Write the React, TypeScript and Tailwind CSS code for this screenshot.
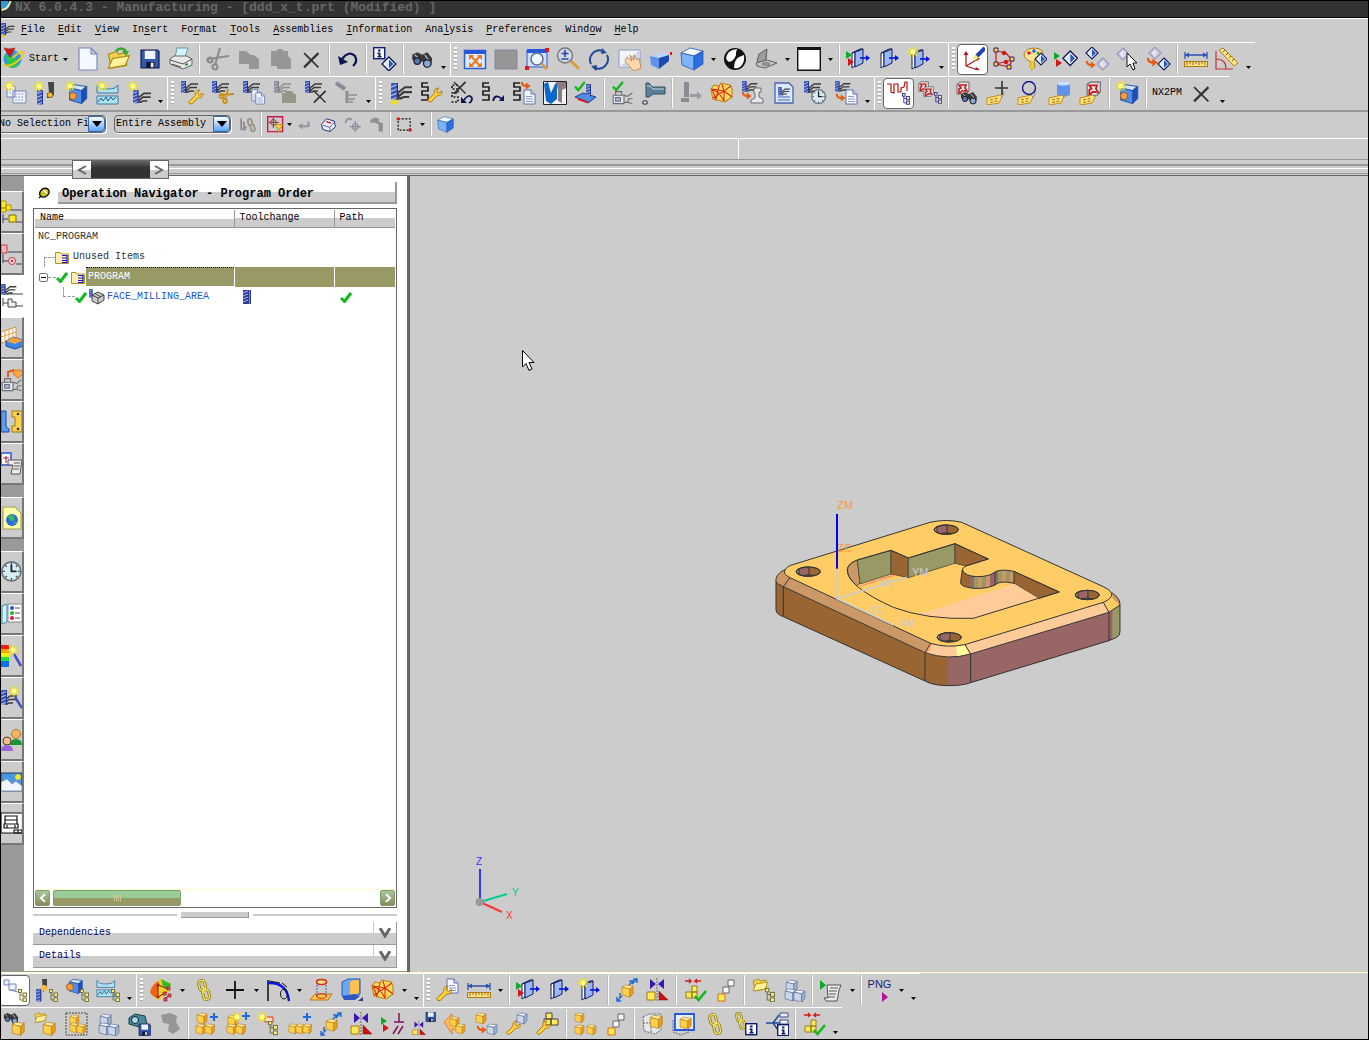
import type { ReactNode } from 'react';
import { clsx } from 'clsx';

type Pos = { x?: number; y?: number; s?: number };

const at = ({ x = 0, y = 0, s = 1 }: Pos) => `translate(${x} ${y}) scale(${s})`;

/* ---------- small drawings that the toolbar icons are built from ---------- */

function Cube({ top = '#fff0a0', left = '#ffd04c', right = '#e8a022', line = '#b87a1c', ...p }: Pos & { top?: string; left?: string; right?: string; line?: string }) {
  return (
    <g transform={at(p)} stroke={line} strokeWidth=".6" strokeLinejoin="round">
      <path d="M1 3 4 1 11 2 8 4.5z" fill={top} />
      <path d="M1 3 8 4.5V12L1 10z" fill={left} />
      <path d="M8 4.5 11 2V9L8 12z" fill={right} />
    </g>
  );
}

const BlueCube = (p: Pos) => <Cube {...p} top="#cfe4ff" left="#4d8ef0" right="#1c4fb8" line="#2a55a8" />;
const GhostCube = (p: Pos) => <Cube {...p} top="#eef4f8" left="#c9d8e4" right="#9fb4cc" line="#5a6aa0" />;

function Star(p: Pos) {
  return (
    <g transform={at(p)}>
      <path d="M5-.5v11M-.5 5h11M1 1l8 8M9 1l-8 8" stroke="#f2e21a" strokeWidth="1.3" />
      <circle cx="5" cy="5" r="2.5" fill="#ffff8a" />
    </g>
  );
}

function Drill({ gray, ...p }: Pos & { gray?: boolean }) {
  return (
    <g transform={at(p)}>
      <rect width="5" height="12" rx="1" fill={gray ? '#8c8c9c' : '#3a55b8'} />
      <path d="M0 3l5-2M0 6l5-2M0 9l5-2M0 12l5-2" stroke={gray ? '#b4b4bc' : '#a8b8f0'} strokeWidth=".9" />
      <path d="M4.500 0v12" stroke={gray ? '#777' : '#1c2a78'} strokeWidth=".8" />
    </g>
  );
}

const Flutes = ({ gray, ...p }: Pos & { gray?: boolean }) => (
  <path transform={at(p)} d="M0 9V7L5 3h7M0 10 4 6.500h7M0 11h2l2-1h4" fill="none" stroke={gray ? '#8c8c8c' : '#3c3c3c'} strokeWidth="1.500" />
);

const Mill = ({ gray, ...p }: Pos & { gray?: boolean }) => (
  <g transform={at(p)}>
    <Flutes x={5} gray={gray} />
    <Drill gray={gray} />
  </g>
);

const Wrench = (p: Pos) => (
  <path transform={at(p)} d="M1 12 7 6C6 3 8 1 11 1L9 4l2 2 3-2c1 3-2 5-4 4L4 14c-2 1-4-1-3-2z" fill="#ffd23c" stroke="#a8700c" strokeWidth=".9" />
);

const Scissors = ({ c = '#8c8c8c', ...p }: Pos & { c?: string }) => (
  <g transform={at(p)} fill="none" stroke={c} strokeWidth="1.800">
    <path d="M9 0 6 10M1 6l14-1" />
    <circle cx="2.500" cy="7" r="2" />
    <circle cx="6" cy="12" r="2" />
  </g>
);

const Cross = (p: Pos) => (
  <g transform={at(p)} fill="none" stroke="#333">
    <path d="M1 1 14 14" strokeWidth="1.500" />
    <path d="M14 1 1 14" strokeWidth="2" />
  </g>
);

const Check = (p: Pos) => <path transform={at(p)} d="M0 5 3.500 9 11 0" fill="none" stroke="#12b81c" strokeWidth="2.600" />;

const Page = (p: Pos) => (
  <g transform={at(p)} stroke="#5064a8" strokeWidth=".9">
    <path d="M1 1H8L12 5V15H1z" fill="#f4f7ff" />
    <path d="M8 1v4h4" fill="#ccd8f0" />
    <path d="M3 7.500h6M3 10h7M3 12.500h7" stroke="#8090b8" />
  </g>
);

const Turn = (p: Pos) => (
  <g transform={at(p)}>
    <path d="M1 0Q1 5 7 5" fill="none" stroke="#e85a10" strokeWidth="2.600" />
    <path d="M6 .5 12 5 6 9.500z" fill="#e85a10" />
  </g>
);

const Binoculars = (p: Pos) => (
  <g transform={at(p)}>
    <path d="M1 3 5 1 9 3 13 1 17 6 16 12 11 13 9 8 6 10 1 7z" fill="#38383c" />
    <path d="M3 3l3 3M11 3l3 4" stroke="#b8bcc4" />
    <circle cx="5" cy="8" r="2.600" fill="#5878b8" stroke="#222" />
    <circle cx="13" cy="10" r="3" fill="#88a8e0" stroke="#222" />
  </g>
);

const Tree = ({ c = '#2828a8', ...p }: Pos & { c?: string }) => (
  <g transform={at(p)} fill="#ffef80" stroke={c} strokeWidth=".9">
    <path d="M2 3v8h4M2 6h4" fill="none" />
    <rect x=".5" y=".5" width="3" height="3" />
    <rect x="5" y="4" width="3.500" height="3.500" />
    <rect x="5" y="9" width="3.500" height="3.500" />
  </g>
);

const Tag = (p: Pos) => (
  <g transform={at(p)}>
    <path d="M1 5 14 2 16 4 13 10 1 12z" fill="#ffe27a" stroke="#b8860c" strokeWidth=".9" />
    <path d="M4 7l3-.7M8.500 6l3-.7M4 9.500l3-.7M8.500 8.500l3-.7" stroke="#a07010" />
    <path d="M15 4Q20 2 17-2" fill="none" stroke="#888" strokeWidth=".8" />
  </g>
);

const Diamond = ({ pale, ...p }: Pos & { pale?: boolean }) => (
  <g transform={at(p)}>
    <path d="M6 0 12 6 6 12 0 6z" fill={pale ? '#c8c8dc' : '#fff'} stroke={pale ? '#9898c0' : '#101c60'} strokeWidth="1.200" />
    <path d="M6 2v8l4-4z" fill={pale ? '#d8d8e8' : '#2c58b8'} />
    <path d="M6 2v8L2.500 6z" fill={pale ? '#e8e8f0' : '#d8e8ff'} />
  </g>
);

const Plus = (p: Pos) => <path transform={at(p)} d="M4 0v8M0 4h8" stroke="#1c6ce0" strokeWidth="2" />;

const Chain = ({ gray, ...p }: Pos & { gray?: boolean }) => (
  <g transform={at(p)} fill="none" stroke={gray ? '#8c8c78' : '#8c7c10'} strokeWidth="3">
    <rect x="2" y="1.500" width="6" height="10" rx="3" transform="rotate(-12 5 6)" />
    <rect x="6" y="10.500" width="6" height="10" rx="3" transform="rotate(-12 9 15)" />
    <g stroke={gray ? '#aaa898' : '#f4e468'} strokeWidth="1.300">
      <rect x="2" y="1.500" width="6" height="10" rx="3" transform="rotate(-12 5 6)" />
      <rect x="6" y="10.500" width="6" height="10" rx="3" transform="rotate(-12 9 15)" />
      <path d="M7 8v6" />
    </g>
  </g>
);

const Floppy = (p: Pos) => (
  <g transform={at(p)}>
    <path d="M0 0H11L12 1V12H0z" fill="#3458ac" stroke="#101c50" strokeWidth=".8" />
    <rect x="2.500" y=".5" width="7" height="5.500" fill="#eef2fa" />
    <rect x="3.500" y="8" width="5.500" height="4" fill="#101830" />
    <rect x="6.500" y="8.500" width="1.800" height="3" fill="#eee" />
  </g>
);

const Folder = (p: Pos) => (
  <g transform={at(p)} stroke="#a8860c" strokeWidth=".8">
    <path d="M1 3 7 1 8 3 14 2V11L3 13z" fill="#f0d050" />
    <path d="M1 13 4 6 16 4 13 11z" fill="#fff29a" />
  </g>
);

const Flags = (p: Pos) => (
  <g transform={at(p)}>
    <path d="M0 0 6 4 0 8z" fill="#10a828" />
    <path d="M2 7 8 11 2 15z" fill="#d01818" />
  </g>
);

const Door = (p: Pos) => (
  <g transform={at(p)} stroke="#101c60" strokeWidth="1">
    <path d="M1 5 4 4V18L1 20z" fill="#fff" />
    <path d="M4 4 12 1V15L4 19z" fill="#9cb8f4" />
    <path d="M1 5 9 1H12L4 4z" fill="#dbe6ff" />
    <path d="M9 10h7" stroke="#0010e8" strokeWidth="1.600" />
    <path d="M15 7 19 10 15 13z" fill="#0010e8" stroke="none" />
  </g>
);

const Snake = ({ dotted, ...p }: Pos & { dotted?: boolean }) => (
  <path transform={at(p)} d="M8 1H2V5H8V9H2V13H8V18H1" fill="none" stroke="#222" strokeWidth="1.700" strokeDasharray={dotted ? '2 1.500' : undefined} />
);

const Clock = (p: Pos) => (
  <g transform={at(p)}>
    <circle cx="8" cy="8" r="7.300" fill="#d8ecf4" stroke="#6c747c" strokeWidth="1.300" />
    <path d="M8 3v5h4" fill="none" stroke="#222" strokeWidth="1.400" />
    <path d="M8 1.500v1.500M8 13v1.500M1.500 8H3M13 8h1.500M3.500 3.500l1 1M12.500 3.500l-1 1M3.500 12.500l1-1M12.500 12.500l-1-1" stroke="#345" />
  </g>
);

const RedPart = (p: Pos) => (
  <g transform={at(p)}>
    <path d="M1 3 4 1H13V10L10 13H1z" fill="#e4e4e4" stroke="#666" />
    <path d="M3 4h7l-1 3 2 3H6L4 12H3V8l2-1z" fill="none" stroke="#c81818" strokeWidth="1.600" />
  </g>
);

const Mirror = (p: Pos) => (
  <g transform={at(p)}>
    <path d="M4 1 10 6 4 11zM18 1 12 6 18 11z" fill="#3c14b4" />
    <path d="M11 0v24" stroke="#666" strokeDasharray="2 1" />
    <path d="M1 14h8v8H1z" fill="#ffe95c" stroke="#a87810" />
    <path d="M13 13 22 22H13z" fill="#d01010" stroke="#801010" strokeWidth=".5" />
  </g>
);

const Rule = (p: Pos) => (
  <g transform={at(p)}>
    <path d="M1 1v7M23 1v7M1 4H23" stroke="#2c50b0" strokeWidth="1.300" />
    <path d="M5 1.500 1 4 5 6.500zM19 1.500 23 4 19 6.500z" fill="#2c50b0" />
    <rect x=".5" y="10.500" width="23" height="5" fill="#ffe28a" stroke="#b07c10" />
    <path d="M3 11v3M6 11v2M9 11v3M12 11v2M15 11v3M18 11v2M21 11v3" stroke="#8c5c08" strokeWidth=".9" />
  </g>
);

const Robot = (p: Pos) => (
  <g transform={at(p)} stroke="#6c6c74" strokeWidth=".9">
    <path d="M1 6H10V13H1z" fill="#e4e6ea" />
    <path d="M3 6V3H8V6M10 6l3 1 4-3M10 12h3l1-3h3M13 12l4 1" fill="none" />
    <rect x="3" y="8" width="4" height="3" fill="#a8b8e0" />
  </g>
);

const Mesh = (p: Pos) => (
  <g transform={at(p)} strokeWidth="1.100">
    <path d="M1 8 4 4 9 5 11 2 20 4 22 8V16L15 21 3 18z" fill="#ffdc60" stroke="#c08010" />
    <path d="M2 8 14 10 21 5M14 10V20M3 17 14 10 22 16M9 5 6 18 2 8 9 12 14 20M12 3 14 10" fill="none" stroke="#e02810" />
  </g>
);

const Blocks = ({ ghost, ...p }: Pos & { ghost?: boolean }) => {
  const C = ghost ? GhostCube : Cube;
  return (
    <g transform={at(p)}>
      <C x={1} />
      <C y={8} />
      <C x={8} y={9} />
    </g>
  );
};

const DiagArrows = () => (
  <g>
    <Cube x={6} y={6} s={1.1} />
    <path d="M17 6 22 1M18 1h4v4M2 19v4h4M2 23l5-5M14 3h4l-4 4M5 15v4" fill="none" stroke="#1c68d0" strokeWidth="1.400" />
  </g>
);

const InfoBox = (p: Pos) => (
  <g transform={at(p)}>
    <rect x=".7" y=".7" width="11" height="11" fill="#fff" stroke="#101c70" strokeWidth="1.400" />
    <path d="M5 2.500h2.500v2H5zM4.500 5.500h3v3.500h1v1.500h-4V9h1V7h-1z" fill="#101c70" />
  </g>
);

const Machine = (p: Pos) => (
  <g transform={at(p)}>
    <path d="M1 7V3Q4 7 8 7H14Q20 7 22 3V11H1z" fill="#b0e4ec" stroke="#3878a8" />
    <path d="M1 14H22V22H1z" fill="#b0e4ec" stroke="#3878a8" />
    <path d="M2 20l3-4 2 3 3-4 2 4 3-4 2 3 3-3" fill="none" stroke="#1c5898" />
  </g>
);

const icons = {
  globe: (
    <>
      <circle cx="11.500" cy="12" r="9" fill="#2c9cdc" />
      <path d="M4 8Q8 14 5 18Q11 23 17 18Q18 12 11 10z" fill="#2cc840" />
      <path d="M3 18Q8 21 18 13Q24 7 22 5Q18 4 12 11" fill="none" stroke="#f4c81c" strokeWidth="2" />
      <path d="M3 1 9 10 14 1Q8 3 3 1z" fill="#d81818" stroke="#801010" strokeWidth=".6" />
    </>
  ),
  newDoc: <path d="M3 1H15L21 7V23H3zM15 1v6h6" fill="#f6f8ff" stroke="#7484c0" strokeWidth="1.100" />,
  open: (
    <>
      <Folder y={3} s={1.4} />
      <path d="M9 4Q14-1 19 4" fill="none" stroke="#34a828" strokeWidth="2.500" />
      <path d="M15 4h7l-3 5z" fill="#34a828" />
    </>
  ),
  save: <Floppy x={3} y={3} s={1.5} />,
  print: (
    <>
      <path d="M8 1H19L16 10H6z" fill="#d4f4fc" stroke="#6898a8" />
      <path d="M1 12 5 9H18L23 12V18L14 22 1 17z" fill="#e8e8e8" stroke="#666" />
      <path d="M1 13 14 17 23 12M3 17l9 3" fill="none" stroke="#555" />
      <path d="M16 18l3-1" stroke="#20a830" strokeWidth="2" />
    </>
  ),
  cut: (
    <g fill="none" stroke="#8c8c8c" strokeWidth="2.200">
      <path d="M14 1 9 18M2 12 23 9" />
      <circle cx="4" cy="13" r="2.500" />
      <circle cx="9" cy="20" r="2.500" />
    </g>
  ),
  copy: <path d="M2 4h7l5 4h3l5 4v10H12v-5H2z" fill="#969696" />,
  paste: <path d="M3 4H8L10 2h4l2 2h4V9l3 3V22H9V19H3z" fill="#969696" />,
  remove: <Cross x={4} y={5} s={1.1} />,
  undo: (
    <>
      <path d="M6 12Q13 3 19 9Q22 15 17 19" fill="none" stroke="#0c1450" strokeWidth="2.200" />
      <path d="M2 9 4 18 12 15z" fill="#0c1450" />
    </>
  ),
  info: (
    <>
      <InfoBox />
      <Diamond x={9} y={10} s={1.15} />
    </>
  ),
  find: <Binoculars x={1} y={4} s={1.25} />,
  fit: (
    <>
      <rect x="1.500" y="3.500" width="21" height="18" fill="#dcebff" stroke="#2c5cd8" strokeWidth="1.500" />
      <path d="M1 3H23V7H1z" fill="#2458d8" />
      <path d="M8 9 17 19M17 9 8 19" stroke="#f07818" strokeWidth="2" />
      <path d="M6 8h5l-5 5zM19 8h-5l5 5zM6 20h5l-5-5zM19 20h-5l5-5z" fill="#f07818" />
    </>
  ),
  blank: <path d="M1 3H23V22H1z" fill="#969696" stroke="#8888a0" />,
  zoomArea: (
    <>
      <path d="M2 3H22V20H2z" fill="#cfe0ff" stroke="#2458d8" />
      <path d="M2 2H22V6H2z" fill="#2458d8" />
      <path d="M17 17 22 22" stroke="#d89c38" strokeWidth="3" />
      <circle cx="12" cy="12" r="6" fill="#eef6ff" stroke="#606c80" strokeWidth="1.500" />
      <path d="M0 19h4v4H0zM20 1h4v4h-4z" fill="#e01818" />
    </>
  ),
  zoom: (
    <>
      <path d="M15 14 23 22" stroke="#d89c38" strokeWidth="3" />
      <circle cx="9" cy="8.500" r="7.500" fill="#d4d8e0" stroke="#787880" strokeWidth="1.500" />
      <path d="M9 3v7M5.500 6.500h7M5.500 12h7" stroke="#2448a8" strokeWidth="1.600" />
    </>
  ),
  rotate: (
    <>
      <path d="M4 17A9.500 9.500 0 0 1 16 4M20 8A9.500 9.500 0 0 1 8 21" fill="none" stroke="#24489c" strokeWidth="2" />
      <path d="M15 1l5 5-6 1zM9 24l-5-5 6-1z" fill="#24489c" />
    </>
  ),
  pan: (
    <>
      <path d="M1 3H22V20H1z" fill="#f2f4fa" stroke="#8c9cc8" />
      <path d="M22 3V20H1z" fill="#ccd6ec" />
      <path d="M9 10l5 4-2-6 4 5 0-5 3 5 2-2 2 10-7 3-5-5-4-5z" fill="#ffd8ac" stroke="#b07c48" strokeWidth=".8" />
    </>
  ),
  perspective: (
    <>
      <path d="M1 9 16 5 20 8 10 11z" fill="#b8d4ff" />
      <path d="M1 9 10 11V22L2 18z" fill="#5c94f0" />
      <path d="M10 11 20 8V14L10 22z" fill="#1c48b0" />
      <path d="M21 5h2v3h-2z" fill="#e01818" />
    </>
  ),
  shaded: (
    <g stroke="#2458b8" strokeWidth=".8">
      <path d="M1 6 10 1 23 4 14 9z" fill="#f4faff" />
      <path d="M1 6 14 9V23L2 18z" fill="#7cb4fc" />
      <path d="M14 9 23 4V17L14 23z" fill="#2c70e0" />
    </g>
  ),
  contrast: (
    <>
      <circle cx="12" cy="12" r="11" fill="#111" />
      <path d="M14 2Q4 3 3 11Q3 13 6 15Q11 14 13 8Q13 4 14 2zM21 8Q22 16 17 20Q14 22 11 21Q11 13 16 10z" fill="#fff" />
    </>
  ),
  section: (
    <>
      <path d="M3 14 5 7 13 2 12 13 5 16z" fill="#9c9c9c" stroke="#606060" />
      <path d="M2 16 13 13 23 16 11 21 3 19z" fill="#c4c4c4" stroke="#606060" />
      <ellipse cx="12" cy="17" rx="4" ry="1.500" fill="#999" stroke="#666" strokeWidth=".6" />
    </>
  ),
  white: (
    <>
      <path d="M.7.7H23.300V23.300H.7z" fill="#fff" stroke="#111" strokeWidth="1.400" />
      <path d="M0 0H24V3H0z" fill="#111" />
    </>
  ),
  importPart: (
    <>
      <Door x={5} y={1} />
      <Flags y={4} />
    </>
  ),
  exportPart: <Door x={3} y={1} />,
  newPart: (
    <>
      <Door x={3} y={2} />
      <Star />
    </>
  ),
  csys: (
    <>
      <path d="M5 19V6M5 19 17 12M5 19 17 23" fill="none" stroke="#b01414" strokeWidth="1.200" />
      <path d="M2.500 8 5 4 7.500 8zM15 11l4 0-3 3zM15 20l4 3h-5z" fill="#b01414" />
      <path d="M13 12 18 7" stroke="#f8ec78" strokeWidth="4.500" />
      <path d="M16 9 24 1" stroke="#1c44b8" strokeWidth="4" />
    </>
  ),
  nodes: (
    <>
      <path d="M4 3V17L17 20M4 4 14 6 20 13 17 20M4 17 20 13" fill="none" stroke="#c81818" strokeWidth="1.200" />
      <path d="M2 1h4v4H2zM18 10h4v4h-4zM2 15h4v4H2zM15 18h4v4h-4z" fill="#f8d820" stroke="#401878" />
      <circle cx="12" cy="6" r="2.200" fill="#d01818" />
      <circle cx="14" cy="15" r="2.200" fill="#d01818" />
    </>
  ),
  palette: (
    <>
      <path d="M1 7Q3 1 12 1Q21 2 20 8Q18 12 13 12L11 14 12 20Q8 25 7 20L8 15Q1 12 1 7z" fill="#ffe29a" stroke="#a87c18" />
      <path d="M8 13l3 1v8H7z" fill="#f4cc30" />
      <circle cx="6" cy="6" r="1.800" fill="#e02020" />
      <circle cx="11" cy="4" r="1.800" fill="#2060e0" />
      <circle cx="15" cy="6" r="1.500" fill="#20a830" />
      <Diamond x={12} y={6} />
    </>
  ),
  showOnly: (
    <>
      <Flags y={5} />
      <Diamond x={9} y={4} s={1.2} />
    </>
  ),
  blankObj: (
    <>
      <Diamond x={1} />
      <Turn x={1} y={14} s={0.8} />
      <Diamond x={12} y={11} pale />
    </>
  ),
  pickObj: (
    <>
      <Diamond x={1} y={1} pale />
      <path d="M11 6V20L14 17 17 23 19 22 17 16H21z" fill="#fff" stroke="#111" />
    </>
  ),
  swapObj: (
    <>
      <Diamond x={2} pale />
      <Turn y={11} s={0.9} />
      <Diamond x={11} y={11} />
    </>
  ),
  measure: <Rule y={4} />,
  angle: (
    <>
      <path d="M1 4V22H18M1 12Q11 12 11 22" fill="none" stroke="#c83030" strokeWidth="1.200" />
      <path d="M4 3 8 1 23 16 19 19z" fill="#ffe28a" stroke="#b07c10" />
      <path d="M8 5l2-2M11 8l2-2M14 11l2-2M17 14l2-2" stroke="#8c5c08" />
    </>
  ),
  createProgram: (
    <>
      <path d="M4 5h8v11H4zM10 10h13v12H10z" fill="#eef2fa" stroke="#7484b8" />
      <path d="M6 9h4M6 12h4M12 13h9M12 16h9M12 19h9" stroke="#90a0c8" strokeDasharray="2 1" />
      <Star x={1} />
    </>
  ),
  createTool: (
    <>
      <Drill x={3} y={9} s={1.2} />
      <path d="M14 1H20V14L17 17H13V12H15z" fill="#444" />
      <circle cx="16" cy="14" r="2.500" fill="#ffc83c" stroke="#a06808" />
      <Star />
    </>
  ),
  createGeom: (
    <>
      <BlueCube x={3} y={2} s={1.7} />
      <circle cx="8" cy="15" r="3.500" fill="#f4a040" stroke="#a85c10" />
      <Star />
    </>
  ),
  createMethod: (
    <>
      <Machine y={1} />
      <Star x={1} />
    </>
  ),
  createOp: (
    <>
      <Mill x={6} y={9} s={1.1} />
      <Star x={1} />
    </>
  ),
  editObj: (
    <>
      <Mill x={1} />
      <Wrench x={8} y={8} s={1.05} />
    </>
  ),
  cutObj: (
    <>
      <Mill x={1} />
      <Scissors x={8} y={8} c="#c8901c" />
    </>
  ),
  copyObj: (
    <>
      <Mill x={1} />
      <Page x={9} y={8} s={0.8} />
      <Page x={13} y={11} s={0.8} />
    </>
  ),
  pasteObj: (
    <>
      <Mill gray x={1} />
      <path d="M9 12h3l2-2h5l2 3h2v9H9z" fill="#969688" />
    </>
  ),
  deleteObj: (
    <>
      <Mill x={1} />
      <Cross x={9} y={9} s={0.9} />
    </>
  ),
  objProps: (
    <g stroke="#8c8c98" fill="none">
      <path d="M1 2 10 8" strokeWidth="4" />
      <path d="M12 10v12" strokeWidth="3" />
      <path d="M14 14h8M14 18h6M14 21h4" strokeWidth="1.400" />
    </g>
  ),
  generate: (
    <>
      <Mill x={3} y={2} s={1.4} />
      <path d="M1 21h10M6 18v6M3 19l6 4M9 19l-6 4" stroke="#f4dc20" strokeWidth="1.200" />
    </>
  ),
  editPath: (
    <>
      <Snake x={1} y={1} />
      <Wrench x={8} y={6} s={1.05} />
    </>
  ),
  deletePath: (
    <>
      <Snake y={3} dotted />
      <Cross x={3} s={0.9} />
      <path d="M14 19Q19 12 22 17 22 21 19 22" fill="none" stroke="#0c1450" strokeWidth="1.800" />
      <path d="M11 16v6h6z" fill="#0c1450" />
    </>
  ),
  replay: (
    <>
      <Snake y={1} />
      <path d="M12 20Q14 12 21 18" fill="none" stroke="#0c1450" strokeWidth="1.800" />
      <path d="M18 20h5v-6z" fill="#0c1450" />
    </>
  ),
  listPath: (
    <>
      <Snake y={1} />
      <Page x={11} y={8} />
      <Turn x={9} y={1} s={0.8} />
    </>
  ),
  verify: (
    <>
      <path d="M.5.5H23.500V23.500H.5z" fill="#f4f4f4" stroke="#222" />
      <path d="M1 3 5 1 8 12 12 3 14 1V18L8 23 3 20z" fill="#0c68c8" />
      <path d="M13 1H23V7L19 9V22L15 20V9z" fill="#8c7c80" />
    </>
  ),
  gouge: (
    <>
      <path d="M1 16 9 12 22 16 14 22z" fill="#4a8ce8" stroke="#1c3c90" />
      <path d="M4 18l9 3" stroke="#d81818" strokeWidth="2" />
      <Drill x={12} y={3} />
      <Check x={1} y={1} s={0.9} />
    </>
  ),
  machineCheck: (
    <>
      <Check x={2} y={1} s={0.9} />
      <Robot x={1} y={7} s={1.2} />
    </>
  ),
  simulate: (
    <>
      <path d="M4 2h3l3 4H23V13H11L7 16H4z" fill="#5c8098" stroke="#34505c" />
      <path d="M5 5h3l3 3H22" fill="none" stroke="#b8d4e0" />
      <path d="M1 20h4v3H1z" fill="#fff" stroke="#222" />
    </>
  ),
  syncTool: (
    <g fill="#8c8c94">
      <path d="M5 1h5v15H5zM2 17h8v4H2z" />
      <path d="M11 13h7v-3l5 5-5 4v-3h-7z" fill="#9c9c9c" />
    </g>
  ),
  mesh: <Mesh />,
  post: (
    <>
      <Mill x={1} s={0.9} />
      <Turn x={1} y={11} s={0.8} />
      <path d="M13 7h7v4h-2v5l4 2v4H10v-3l4-2v-5h-1z" fill="#e4e6ea" stroke="#6c6c74" />
    </>
  ),
  shopDoc: (
    <>
      <path d="M3 2H17L21 6V22H3z" fill="#dce8ff" stroke="#4864b0" strokeWidth="1.300" />
      <Mill x={6} y={6} s={0.7} />
      <path d="M6 16h12M6 19h12" stroke="#4864b0" />
    </>
  ),
  opTime: (
    <>
      <Mill x={1} />
      <Clock x={8} y={8} s={0.95} />
    </>
  ),
  outputCls: (
    <>
      <Mill x={1} s={0.9} />
      <Turn x={2} y={13} s={0.8} />
      <Page x={11} y={8} />
    </>
  ),
  opView: (
    <>
      <path d="M0 3H4V11L7 12V3H11V11H14V7L17 6 18 1H20V10" fill="none" stroke="#b01414" strokeWidth="1.200" />
      <Tree x={15} y={12} s={0.9} c="#1c1c98" />
    </>
  ),
  opParts: (
    <>
      <RedPart s={0.8} />
      <RedPart x={5} y={5} s={0.8} />
      <Tree x={16} y={11} s={0.9} />
    </>
  ),
  findFeat: (
    <>
      <RedPart x={1} />
      <Binoculars x={5} y={10} />
    </>
  ),
  tagPlus: (
    <>
      <Tag y={12} />
      <path d="M16 0v14M9 7h13" stroke="#333" strokeWidth="1.600" />
    </>
  ),
  tagCircle: (
    <>
      <Tag y={12} />
      <circle cx="12" cy="7" r="6.500" fill="none" stroke="#14148c" strokeWidth="1.400" />
    </>
  ),
  tagCyl: (
    <>
      <path d="M9 2Q15-1 22 2V14Q15 17 9 14z" fill="#5c94f0" />
      <ellipse cx="15.500" cy="2.500" rx="6.500" ry="2" fill="#cfe0ff" />
      <Tag y={12} />
    </>
  ),
  tagPart: (
    <>
      <RedPart x={7} s={1.1} />
      <Tag y={12} />
    </>
  ),
  closeX: <Cross x={4} y={5} s={1.1} />,
  progView: (
    <>
      <path d="M1 2h5v5H1zM6 6h7v6H6z" fill="#eef2fa" stroke="#7484b8" />
      <path d="M7 12l8 2" stroke="#7484b8" />
      <Tree x={15} y={11} c="#6c6c3c" />
    </>
  ),
  toolView: (
    <>
      <Drill x={2} y={11} s={1.05} />
      <path d="M8 1h5v10l-4 3z" fill="#444" />
      <circle cx="10" cy="10" r="3" fill="#ffb83c" />
      <Tree x={15} y={11} c="#6c6c3c" />
    </>
  ),
  geomView: (
    <>
      <BlueCube x={3} s={1.3} />
      <circle cx="5" cy="9" r="3.500" fill="#f4a040" stroke="#a85c10" />
      <Tree x={15} y={11} c="#6c6c3c" />
    </>
  ),
  methodView: (
    <>
      <Machine s={0.85} />
      <Tree x={15} y={11} c="#6c6c3c" />
    </>
  ),
  thermal: (
    <>
      <path d="M1 14Q2 6 12 1L22 6 20 14 10 22Q4 20 1 14z" fill="#f4d020" />
      <path d="M1 14Q3 6 10 3L8 20Q3 18 1 14z" fill="#f06018" />
      <path d="M12 1 22 6 20 12 14 8z" fill="#38b830" />
      <path d="M9 7v12l9-5M9 7l10 4M16 20l4-2" fill="none" stroke="#801028" />
      <path d="M8 6h2v2H8zM8 18h2v2H8zM18 9h3v3h-3zM14 14h3v3h-3zM19 16h3v3h-3zM15 20h3v3h-3z" fill="#f45858" stroke="#801028" strokeWidth=".7" />
    </>
  ),
  chain: <Chain x={5} y={1} />,
  point: <path d="M12 3v18M3 12h18" stroke="#111" strokeWidth="1.800" />,
  curve: (
    <>
      <path d="M2 2V23" stroke="#111" strokeWidth="1.500" />
      <path d="M2 5Q21 4 23 23" fill="none" stroke="#0c18e0" strokeWidth="2.400" />
      <ellipse cx="18" cy="16" rx="3.500" ry="5" fill="none" stroke="#111" />
      <path d="M3 3 14 5M16 5l5 4" stroke="#111" />
    </>
  ),
  extrude: (
    <>
      <path d="M1 22 6 16H23L19 22z" fill="#ffc850" stroke="#b87810" />
      <path d="M8 4V18M17 4V18" stroke="#4858d8" strokeDasharray="2 1" />
      <ellipse cx="12.500" cy="4" rx="5" ry="2.500" fill="#fce488" stroke="#d82818" strokeWidth="1.500" />
      <ellipse cx="12.500" cy="18" rx="5" ry="2.200" fill="none" stroke="#d82818" />
    </>
  ),
  block: (
    <>
      <path d="M2 4 8 1H20V16L13 20 2 18z" fill="#6ca8f4" stroke="#2458a8" />
      <path d="M10 4 13 2H19V15L10 17z" fill="#ffc050" />
      <path d="M2 18 15 16 20 18 15 22H4z" fill="#2c58c0" />
      <path d="M23 19v4h-5z" fill="#2c3c78" />
    </>
  ),
  partNav: (
    <>
      <Page x={10} y={0} />
      <Wrench y={7} s={1.1} />
    </>
  ),
  move: <DiagArrows />,
  mirror: <Mirror />,
  assemblyCheck: (
    <>
      <path d="M2 3h6l-2-2M8 3 6 5M18 3h-6l2-2M12 3l2 2" fill="none" stroke="#d81818" strokeWidth="1.300" />
      <path d="M9 8h5v6H9zM3 14h6v6H3zM9 14h5v6H9z" fill="#ffe95c" stroke="#908010" />
      <Check x={12} y={13} />
    </>
  ),
  explode: (
    <>
      <path d="M12 12 18 4" stroke="#666" />
      <path d="M14 2h6v6h-6zM9 9h6v6H9z" fill="#f8f8f8" stroke="#666" />
      <path d="M4 16h7v7H4z" fill="#ffe95c" stroke="#d87010" />
    </>
  ),
  folderTree: (
    <>
      <Folder x={1} />
      <Tree x={14} y={10} s={1.1} c="#6c6c3c" />
    </>
  ),
  ghostBlocks: <Blocks ghost x={2} y={1} s={1.1} />,
  script: (
    <>
      <path d="M1 2 7 7 1 12z" fill="#10a828" />
      <path d="M8 7H22L20 12 18 23H7L5 20H9z" fill="#ececec" stroke="#555" />
      <path d="M11 10h8M10 13h8M10 16h7M9 19h7" stroke="#555" />
    </>
  ),
  png: <path d="M14 14 20 19 14 24z" fill="#b410a0" />,
  findComp: (
    <>
      <Binoculars s={0.9} />
      <Cube x={8} y={9} s={1.2} />
    </>
  ),
  openComp: (
    <>
      <Folder s={0.8} />
      <Cube x={8} y={9} s={1.2} />
    </>
  ),
  selectComp: (
    <>
      <path d="M1 1H22V23H1z" fill="none" stroke="#444" strokeDasharray="2 1" />
      <Cube x={4} y={2} s={0.9} />
      <Cube x={4} y={10} s={0.9} />
      <Cube x={11} y={11} s={0.9} />
    </>
  ),
  snapshot: (
    <>
      <path d="M2 6 8 2 18 4 20 12 12 15 2 12z" fill="#4c8898" stroke="#203c48" />
      <circle cx="8" cy="8" r="3.500" fill="#a8dce8" stroke="#123" />
      <Floppy x={12} y={12} s={0.95} />
    </>
  ),
  grayPart: <path d="M3 3 12 1 19 4 18 10 22 17 15 22 10 19 11 12 5 11z" fill="#969696" />,
  addComp: (
    <>
      <Cube x={1} />
      <Cube y={11} s={0.95} />
      <Cube x={9} y={11} s={0.95} />
      <Plus x={15} y={1} />
    </>
  ),
  newComp: (
    <>
      <Cube x={1} y={2} />
      <Cube y={11} s={0.95} />
      <Cube x={9} y={11} s={0.95} />
      <Star x={6} />
      <Plus x={16} />
    </>
  ),
  newParent: (
    <>
      <path d="M8 5h8v5H8z" fill="#ffe0c0" stroke="#d83018" />
      <Star />
      <Tree x={11} y={9} s={1.1} c="#6c6c3c" />
    </>
  ),
  arrayComp: (
    <>
      <Cube y={11} s={0.9} />
      <Cube x={7} y={11} s={0.9} />
      <Cube x={14} y={11} s={0.9} />
      <Plus x={15} y={1} />
    </>
  ),
  constraint: (
    <>
      <Flags y={5} />
      <path d="M18 1v9M13 10h10M12 22l5-8M17 22l5-8" stroke="#80105c" strokeWidth="1.500" />
    </>
  ),
  mirrorSave: (
    <>
      <Mirror y={9} s={0.62} />
      <Floppy x={14} s={0.8} />
    </>
  ),
  suppress: (
    <>
      <path d="M1 10 9 2V7h5V17H9V22z" fill="#ffb868" stroke="#e0842c" />
      <Cube x={6} y={4} s={0.9} />
      <Cube x={12} y={11} s={0.9} />
    </>
  ),
  replaceComp: (
    <>
      <Cube x={1} />
      <Turn x={3} y={14} s={0.8} />
      <GhostCube x={12} y={11} />
    </>
  ),
  editGhost: (
    <>
      <GhostCube x={11} />
      <Wrench x={1} y={8} />
    </>
  ),
  editYellow: (
    <>
      <path d="M10 1h6v6h-6zM8 7h7v6H8zM15 7h7v6h-7z" fill="#ffe95c" stroke="#444" />
      <Wrench x={0} y={8} />
    </>
  ),
  pattern: (
    <>
      <Cube x={1} s={0.9} />
      <Cube x={1} y={12} s={0.9} />
      <Cube x={13} y={12} s={0.9} />
    </>
  ),
  wave: (
    <>
      <path d="M2 5 8 2H20V18L14 22 3 19zM2 11h8v9M10 5v6" fill="#e4e8e8" stroke="#667" strokeDasharray="2 1" />
      <Cube x={8} y={2} s={1.2} />
    </>
  ),
  waveWin: (
    <>
      <path d="M1 8v12l8 3 8-3" fill="none" stroke="#667" strokeDasharray="2 1" />
      <path d="M3 2H22V18H3z" fill="#e4eeff" stroke="#2458d8" strokeWidth="1.800" />
      <Cube x={7} y={4} s={1.1} />
    </>
  ),
  chainInfo: (
    <>
      <Chain x={1} s={0.8} />
      <InfoBox x={11} y={11} />
    </>
  ),
  treeInfo: (
    <>
      <path d="M1 11h7L14 3M8 11h7M8 11l5 7" fill="none" stroke="#24489c" strokeWidth="1.500" />
      <path d="M15 1h8v4h-8zM15 8h8v4h-8z" fill="#eef2fa" stroke="#3c4c90" />
      <InfoBox x={12} y={12} />
    </>
  ),
  link: (
    <>
      <path d="M3 3v16M7 8v8h4M3 19h7" fill="none" stroke="#8c8c8c" strokeWidth="2.500" />
      <Chain gray x={11} y={3} s={0.9} />
    </>
  ),
  snapPoint: (
    <>
      <path d="M1 1H22V22H1z" fill="none" stroke="#c8184c" strokeWidth="2" />
      <circle cx="9" cy="9" r="4" fill="none" stroke="#902020" strokeWidth="1.200" />
      <path d="M9 2v15M2 9h15" stroke="#902020" strokeWidth="1.200" />
      <path d="M11 12H23L18 17V23L15 21V17z" fill="#ffd820" stroke="#a07c08" />
    </>
  ),
  back: <path d="M19 8v8H9v3l-6-5 6-4v3h7V8z" fill="#8c9c9c" />,
  wire: (
    <>
      <path d="M2 12 9 4 20 7 22 15 14 22 4 19z" fill="#f0f0f4" stroke="#1c2c80" strokeWidth="1.300" />
      <path d="M9 8l6 2M4 13l10 3 7-8M14 16v5" fill="none" stroke="#1c2c80" />
      <path d="M9 8l6 2" stroke="#e01818" strokeWidth="2" />
    </>
  ),
  target: (
    <g fill="none" stroke="#8c8c9c" strokeWidth="1.600">
      <path d="M2 10Q4 1 11 5" strokeWidth="2.400" />
      <circle cx="16" cy="15" r="4" />
      <path d="M16 7v16M8 15h16" />
    </g>
  ),
  hammer: <path d="M3 6 9 2 16 4 15 8 21 10V22H15V12L9 9 4 10z" fill="#909090" />,
  rect: (
    <>
      <path d="M3 4H20V20H3z" fill="none" stroke="#111" strokeWidth="1.600" strokeDasharray="3 2" />
      <path d="M1 2h4v4H1zM18 18h4v4h-4z" fill="#e01818" />
    </>
  ),
  tabAsm: (
    <>
      <path d="M0 1h5v7H0zM5 5h5v5H5zM0 8h5v4H0z" fill="#ffe820" stroke="#a89808" />
      <path d="M2 14v9M2 19h5M10 10h12M15 22h7" stroke="#3c3c60" />
      <path d="M8 15h7v7H8z" fill="#ffe820" stroke="#777008" />
    </>
  ),
  tabCon: (
    <>
      <path d="M0 3h6v8H0z" fill="#f8b4b4" stroke="#c83838" />
      <path d="M2 12v9M2 19h5M7 10h15M15 22h7" stroke="#3c3c60" />
      <circle cx="11" cy="19" r="3.500" fill="#f8d8d8" stroke="#c83838" />
      <circle cx="11" cy="19" r="1.200" fill="#c83838" />
    </>
  ),
  tabOp: (
    <>
      <Mill x={0} y={0} s={0.9} />
      <path d="M6 10h16M2 14v8M2 19h5M14 22h8" stroke="#444" />
      <path d="M7 15h4v3h4v5H7z" fill="#eee" stroke="#444" />
    </>
  ),
  tabFeat: (
    <>
      <path d="M0 6 15 1V12L0 17z" fill="#fff" stroke="#d89030" />
      <path d="M4 5v10M8 4v10M12 3v10M0 11l15-5" stroke="#e8a040" />
      <path d="M5 15 12 11 22 14V20L14 23 5 20z" fill="#3888e8" stroke="#1c489c" />
      <path d="M5 15 12 11 22 14 14 18z" fill="#f4a040" />
    </>
  ),
  tabMach: (
    <>
      <path d="M13 2 7 4v5" fill="none" stroke="#e85a10" strokeWidth="2" />
      <path d="M13 2h7l2 4-5 4-5-4z" fill="#ffa848" stroke="#d87818" />
      <Robot y={7} s={1.2} />
    </>
  ),
  tabPart: (
    <>
      <path d="M0 1h5v16l3 2v3H0z" fill="#5c9cf0" stroke="#1c489c" />
      <path d="M11 1h10v21H11v-6h3V7h-3z" fill="#fcd048" stroke="#a07808" />
      <circle cx="17" cy="4" r="1.300" fill="#333" />
      <circle cx="17" cy="19" r="1.300" fill="#333" />
    </>
  ),
  tabProc: (
    <>
      <path d="M0 1h10v12H0z" fill="#fff" stroke="#2458d8" strokeWidth="1.500" />
      <path d="M2 6h6M5 4v7" stroke="#b01414" />
      <path d="M7 8H21L19 22H10L12 13H7z" fill="#ececec" stroke="#555" />
      <path d="M13 11h6M13 14h6M12 17h6" stroke="#555" />
    </>
  ),
  tabWeb: (
    <>
      <path d="M2 1H14L20 7V23H2z" fill="#ffffa8" stroke="#9c9c50" />
      <circle cx="11" cy="14" r="6" fill="#2c6cdc" />
      <path d="M7 11q4-4 6 0t-3 4zM12 17l4-2-1 3z" fill="#3cc04c" />
    </>
  ),
  tabClock: <Clock s={1.3} y={1} />,
  tabRoles: (
    <>
      <path d="M1 4 6 2V20L1 22z" fill="#c8f4fc" stroke="#4888a0" />
      <path d="M7 2H21V20H7z" fill="#fff" stroke="#888" />
      <circle cx="11" cy="6" r="2" fill="#2c4ce0" />
      <circle cx="11" cy="11" r="2" fill="#20b830" />
      <circle cx="11" cy="16" r="2" fill="#e01848" />
      <path d="M14 6h5M14 11h5M14 16h5" stroke="#555" />
    </>
  ),
  tabRainbow: (
    <>
      <path d="M0 1h8v5H0z" fill="#f02010" />
      <path d="M0 5h8v4H0z" fill="#f8a010" />
      <path d="M0 9h8v4H0z" fill="#f4f010" />
      <path d="M0 13h8v5H0z" fill="#20e040" />
      <path d="M0 17h8v6H0z" fill="#1070f0" />
      <path d="M13 10 20 22" stroke="#4050c8" strokeWidth="2.500" />
      <Star x={7} y={1} />
    </>
  ),
  tabWizard: (
    <>
      <Flutes x={4} y={7} />
      <Drill y={4} s={1.2} />
      <path d="M14 11 21 22" stroke="#4050c8" strokeWidth="2.500" />
      <Star x={8} />
    </>
  ),
  tabUsers: (
    <>
      <circle cx="15" cy="6" r="4.500" fill="#f4b468" stroke="#b07818" />
      <path d="M9 17Q9 11 15 11Q21 11 21 17z" fill="#189838" />
      <circle cx="6" cy="13" r="4" fill="#f4c090" stroke="#603818" />
      <path d="M0 23Q0 17 6 17Q12 17 12 23z" fill="#9868d8" />
    </>
  ),
  tabScene: (
    <>
      <path d="M0 3H21V21H0z" fill="#4898e0" stroke="#223c60" />
      <path d="M0 12 6 9l5 5 4-3 6 5V21H0z" fill="#f0f4fc" stroke="#8898c0" />
      <circle cx="17" cy="7" r="2.800" fill="#ffe820" />
    </>
  ),
  tabTouch: (
    <>
      <path d="M0 1H21.500V21H0z" fill="#fff" stroke="#111" strokeWidth="1.200" />
      <path d="M4 4H16V8H4zM4 8v4h12V8M3 12h14v4H3zM6 13v3M14 13v3M13 18h8v3h-8zM17 18v3" fill="none" stroke="#111" strokeWidth="1.200" />
    </>
  ),
} satisfies Record<string, ReactNode>;

type IconName = keyof typeof icons;
type Item = IconName | '|' | 'v' | 'more' | 'nx2pm';

function Icon({ name, className = 'size-6' }: { name: IconName; className?: string }) {
  return (
    <svg viewBox="0 0 24 24" className={clsx('shrink-0', className)} aria-hidden="true">
      {icons[name]}
    </svg>
  );
}

const Caret = () => (
  <svg viewBox="0 0 5 3" className="h-[3px] w-[5px]" aria-hidden="true">
    <path d="M0 0H5L2.500 3z" fill="#000" />
  </svg>
);

/* ---------- toolbars ---------- */

const Grip = () => <div className="h-6 w-[3px] shrink-0 bg-[repeating-linear-gradient(to_bottom,#fff_0_2px,#aaa_2px_3px,#ccc_3px_4px)]" />;

function Tool({ item, pressed }: { item: Item; pressed: boolean }) {
  if (item === '|') {
    return <div className="mx-[2px] h-[30px] w-0.5 shrink-0 border-l border-[#bbb] bg-white" />;
  }
  if (item === 'v') {
    return (
      <button aria-label="Show list" className="flex w-3 shrink-0 items-center justify-center">
        <Caret />
      </button>
    );
  }
  if (item === 'more') {
    return (
      <button aria-label="Toolbar options" className="flex h-6 w-[13px] shrink-0 items-end justify-center pb-0.5">
        <Caret />
      </button>
    );
  }
  if (item === 'nx2pm') {
    return <button className="w-9 shrink-0 text-center text-[10px]">NX2PM</button>;
  }
  return (
    <button
      aria-label={item}
      aria-pressed={pressed || undefined}
      className={clsx(
        'flex h-[31px] w-[31px] shrink-0 items-center justify-center',
        pressed && 'rounded-sm border border-[#666] bg-white'
      )}
    >
      {item === 'png' ? (
        <span className="relative flex size-6 items-start justify-center font-['Liberation_Sans'] text-[11px] leading-3 text-[#1c1c78]">
          <Icon name="png" className="absolute inset-0 size-6" />
          PNG
        </span>
      ) : (
        <Icon name={item} />
      )}
    </button>
  );
}

function Toolbar({ items, pressed, grip = true, children }: { items: Item[]; pressed?: IconName; grip?: boolean; children?: ReactNode }) {
  return (
    <div role="toolbar" className={clsx('flex h-[34px] shrink-0 items-center border-t border-white pb-px', grip && 'border-l')}>
      {grip && (
        <div className="flex w-2 shrink-0 justify-center">
          <Grip />
        </div>
      )}
      {children}
      {items.map((item, i) => (
        <Tool key={i} item={item} pressed={item === pressed} />
      ))}
    </div>
  );
}

const standard: Item[] = ['newDoc', 'open', 'save', 'print', '|', 'cut', 'copy', 'paste', 'remove', '|', 'undo', '|', 'info', '|', 'find', 'more'];
const view: Item[] = ['fit', 'blank', 'zoomArea', 'zoom', 'rotate', 'pan', 'perspective', 'shaded', 'v', 'contrast', 'section', 'v', 'white', 'v', '|', 'importPart', 'exportPart', 'newPart', 'more'];
const utility: Item[] = ['csys', 'nodes', 'palette', 'showOnly', 'blankObj', 'pickObj', 'swapObj', '|', 'measure', 'angle', 'more'];
const insert: Item[] = ['createProgram', 'createTool', 'createGeom', 'createMethod', 'createOp', 'more'];
const objects: Item[] = ['editObj', 'cutObj', 'copyObj', 'pasteObj', 'deleteObj', 'objProps', 'more'];
const operations: Item[] = ['generate', 'editPath', 'deletePath', 'replay', 'listPath', 'verify', 'gouge', '|', 'machineCheck', 'simulate', '|', 'syncTool', 'mesh', 'post', 'shopDoc', 'opTime', 'outputCls', 'more'];
const features: Item[] = ['opView', 'opParts', '|', 'findFeat', 'tagPlus', 'tagCircle', 'tagCyl', 'tagPart', '|', 'createGeom', '|', 'nx2pm', 'closeX', 'more'];
const navViews: Item[] = ['progView', 'toolView', 'geomView', 'methodView', 'more'];
const geometry: Item[] = ['thermal', 'v', 'chain', 'point', 'v', 'curve', 'v', 'extrude', 'block', 'mesh', 'v', 'more'];
const application: Item[] = ['partNav', 'measure', 'v', '|', 'importPart', 'exportPart', 'newPart', '|', 'move', 'mirror', '|', 'assemblyCheck', 'explode', '|', 'folderTree', 'ghostBlocks', '|', 'script', 'v', '|', 'png', 'v', 'more'];
const assemblies: Item[] = [
  'findComp', 'openComp', 'selectComp', 'ghostBlocks', 'snapshot', 'grayPart', '|',
  'addComp', 'newComp', 'newParent', 'arrayComp', 'move', 'mirror', 'constraint', 'mirrorSave', 'suppress', 'replaceComp', 'editGhost', 'editYellow', '|',
  'pattern', 'explode', '|', 'wave', 'waveWin', 'chain', 'chainInfo', 'treeInfo', '|', 'assemblyCheck', 'more',
];

const menus = ['&File', '&Edit', '&View', 'In&sert', 'Fo&rmat', '&Tools', '&Assemblies', '&Information', 'Ana&lysis', '&Preferences', 'Wind&ow', '&Help'];

function MenuBar() {
  return (
    <nav className="flex h-[23px] items-center gap-[13px] pb-0.5">
      <svg viewBox="0 0 14 16" className="-mr-[7px] h-4 w-[14px]" aria-hidden="true">
        <Drill y={1} />
        <Flutes x={4} y={2} s={0.8} />
        <path d="M0 14h5" stroke="#f4c820" strokeWidth="2" />
      </svg>
      {menus.map((m) => {
        const [pre, rest] = m.split('&');
        return (
          <button key={m}>
            {pre}
            <u className="underline-offset-2">{rest[0]}</u>
            {rest.slice(1)}
          </button>
        );
      })}
    </nav>
  );
}

function Combo({ label, value, className }: { label: string; value: string; className: string }) {
  return (
    <div className={clsx('relative h-[18px] shrink-0 overflow-hidden rounded-sm border border-[#666] bg-[#ccc] shadow-[1px_1px_0_#fff]', className)}>
      <select aria-label={label} className="block h-4 w-full appearance-none bg-transparent pr-4 pl-px leading-4 outline-none">
        <option>{value}</option>
      </select>
      <div className="pointer-events-none absolute inset-y-0 right-0 flex w-[17px] items-center justify-center rounded-r-sm border border-[#3366aa] bg-linear-to-b from-white to-[#5aa4f4]">
        <svg viewBox="0 0 10 6" className="h-1.5 w-2.5" aria-hidden="true">
          <path d="M0 0H10L5 6z" fill="#000" />
        </svg>
      </div>
    </div>
  );
}

const SmallTool = ({ name }: { name: IconName }) => (
  <button aria-label={name} className="flex w-6 shrink-0 items-center justify-center">
    <Icon name={name} className="size-[17px]" />
  </button>
);

const SmallSep = () => <div className="mx-px h-6 w-0.5 shrink-0 border-l border-[#bbb] bg-white" />;

function SelectionBar() {
  return (
    <div className="flex h-7 items-center border-t-2 border-[#999] pb-0.5">
      <Combo label="Selection filter" value="No Selection Fi" className="-ml-1 w-[109px]" />
      <Combo label="Selection scope" value="Entire Assembly" className="ml-2 w-[117px]" />
      <div className="ml-1 flex items-center">
        <SmallTool name="link" />
        <SmallSep />
        <SmallTool name="snapPoint" />
        <Caret />
        <SmallTool name="back" />
        <SmallTool name="wire" />
        <SmallTool name="target" />
        <SmallTool name="hammer" />
        <SmallSep />
        <SmallTool name="rect" />
        <div className="mx-1">
          <Caret />
        </div>
        <SmallSep />
        <SmallTool name="shaded" />
      </div>
    </div>
  );
}

/* The prompt line and the handle of the tab that slides over the dock edge */
function PromptBar() {
  return (
    <div className="relative">
      <div className="flex h-[22px] border-t border-b border-t-white border-b-[#999]">
        <div className="w-[54%] border-r border-white" />
        <div className="flex-1" />
      </div>
      <div className="h-1.5 border-b-2 border-[#999]" />
      <div className="h-2 border-b border-[#999] pt-0.5">
        <div className="h-px bg-white" />
      </div>
      <div className="h-0.5 border-b border-[#666]" />
      <div className="absolute top-[22px] left-[71px] z-10 flex h-[19px] w-[97px] border border-[#666] bg-linear-to-b from-[#666] to-[#333] to-40%">
        <button aria-label="Scroll left" className="flex w-[18px] items-center justify-center bg-[linear-gradient(#fff_50%,#ccc_50%)]">
          <svg viewBox="0 0 10 10" className="size-2.5" aria-hidden="true">
            <path d="M9 1 2 5 9 9" fill="none" stroke="#666" strokeWidth="2" />
          </svg>
        </button>
        <div className="flex-1" />
        <button aria-label="Scroll right" className="flex w-[18px] items-center justify-center bg-[linear-gradient(#fff_50%,#ccc_50%)]">
          <svg viewBox="0 0 10 10" className="size-2.5" aria-hidden="true">
            <path d="M1 1 8 5 1 9" fill="none" stroke="#666" strokeWidth="2" />
          </svg>
        </button>
      </div>
    </div>
  );
}

/* ---------- resource bar and navigator ---------- */

const tabGroups: IconName[][] = [
  ['tabAsm', 'tabCon', 'tabOp', 'tabFeat', 'tabMach', 'tabPart', 'tabProc'],
  ['tabWeb'],
  ['tabClock', 'tabRoles', 'tabRainbow', 'tabWizard', 'tabUsers', 'tabScene', 'tabTouch'],
];

function ResourceBar() {
  return (
    <aside className="flex w-[23px] shrink-0 flex-col gap-3 bg-[#999] pt-[15px]">
      {tabGroups.map((tabs, i) => (
        <div key={i} className="flex flex-col">
          {tabs.map((t) => (
            <button
              key={t}
              aria-label={t}
              className={clsx(
                'flex h-[42px] w-[23px] items-center overflow-hidden',
                t === 'tabOp' ? 'bg-white' : 'border-t border-r-2 border-b-2 border-t-white border-r-[#777] border-b-[#777] bg-[#ccc]'
              )}
            >
              <Icon name={t} />
            </button>
          ))}
        </div>
      ))}
    </aside>
  );
}

const halfGray = 'bg-[linear-gradient(#fff_50%,#ccc_50%)]';

const FolderIcon = () => (
  <svg viewBox="0 0 14 13" className="h-[13px] w-[14px] shrink-0" aria-hidden="true">
    <path d="M.5 1.500H5L6 3H13.500V12.500H.5z" fill="#ffeeb0" stroke="#b89020" />
    <path d="M7 4.500h5v5M7 7h5M7 9.500h5v2H7" fill="none" stroke="#1414d8" strokeWidth="1.200" />
  </svg>
);

const TreeCheck = () => (
  <svg viewBox="0 0 12 11" className="h-[11px] w-3 shrink-0" aria-hidden="true">
    <path d="M1 6 4.500 9.500 11 1" fill="none" stroke="#12b822" strokeWidth="3" />
  </svg>
);

function OperationTable() {
  return (
    <table className="w-full table-fixed border-collapse">
      <colgroup>
        <col className="w-[199px]" />
        <col className="w-[100px]" />
        <col />
      </colgroup>
      <thead>
        <tr className="h-[17px]">
          {['Name', 'Toolchange', 'Path'].map((h) => (
            <th key={h} className={clsx('border-r border-b border-[#999] p-0 pl-[5px] text-left font-normal last:border-r-0', halfGray)}>
              {h}
            </th>
          ))}
        </tr>
      </thead>
      <tbody className="text-[#333]">
        <tr className="h-5">
          <td className="p-0 pl-[3px]">NC_PROGRAM</td>
          <td className="p-0" />
          <td className="p-0" />
        </tr>
        <tr className="h-5">
          <td className="p-0">
            <div className="flex h-5 items-center">
              <div className="ml-[9px] h-2.5 w-[11px] self-end border-t border-l border-dashed border-[#999]" />
              <FolderIcon />
              <span className="ml-1">Unused Items</span>
            </div>
          </td>
          <td className="p-0" />
          <td className="p-0" />
        </tr>
        <tr className="h-5">
          <td className="p-0">
            <div className="flex h-5 items-center">
              <div className="ml-1 flex size-[9px] items-center justify-center rounded-xs border border-[#777] bg-white">
                <div className="h-px w-[5px] bg-black" />
              </div>
              <div className="w-2 border-t border-dashed border-[#999]" />
              <TreeCheck />
              <div className="w-[3px]" />
              <FolderIcon />
              <div className="ml-px flex h-[19px] flex-1 items-center self-start border-t border-dotted border-[#000066] bg-[#999966] pl-[2px] text-white">PROGRAM</div>
            </div>
          </td>
          <td className="border-x border-b border-white bg-[#999966] bg-clip-padding p-0" />
          <td className="border-b border-white bg-[#999966] bg-clip-padding p-0" />
        </tr>
        <tr className="h-5">
          <td className="p-0">
            <div className="flex h-5 items-center text-[#2255cc]">
              <div className="ml-7 h-2.5 w-3 self-start border-b border-l border-dashed border-[#999]" />
              <TreeCheck />
              <svg viewBox="0 0 16 16" className="ml-0.5 size-4" aria-hidden="true">
                <path d="M3 6 9 3 15 6V11L9 15 3 12z" fill="#ccc" stroke="#444" />
                <path d="M3 6 9 9 15 6M9 9V15M6 4.500 12 8" fill="none" stroke="#444" />
                <Drill s={0.7} />
              </svg>
              <span className="ml-0.5">FACE_MILLING_AREA</span>
            </div>
          </td>
          <td className="p-0 pl-[9px]">
            <svg viewBox="0 0 8 14" className="block h-3.5 w-2" aria-hidden="true">
              <rect width="8" height="14" fill="#2c3c90" />
              <path d="M0 3l5-2M0 6l5-2M0 9l5-2M0 12l5-2" stroke="#a8b8f0" />
              <path d="M6.500 0V14" stroke="#888" />
            </svg>
          </td>
          <td className="p-0 pl-1.5">
            <TreeCheck />
          </td>
        </tr>
      </tbody>
    </table>
  );
}

function ScrollButton({ d, label }: { d: string; label: string }) {
  return (
    <button aria-label={label} className="flex w-[15px] items-center justify-center rounded-xs border border-[#7c9c6c] bg-linear-to-b from-[#a8c8a0] to-[#888c58]">
      <svg viewBox="0 0 8 8" className="size-2" aria-hidden="true">
        <path d={d} fill="none" stroke="#fff" strokeWidth="2" />
      </svg>
    </button>
  );
}

function Section({ title }: { title: string }) {
  return (
    <button className={clsx('flex h-[23px] w-full items-center border-r border-b border-[#999] pl-[6px] text-left text-[#000066]', halfGray)}>
      <span className="flex-1">{title}</span>
      <span className="flex h-full w-[23px] items-center justify-center border-l border-[#ccc]">
        <svg viewBox="0 0 12 10" className="h-2.5 w-3" aria-hidden="true">
          <path d="M1 0 6 8 11 0" fill="none" stroke="#666" strokeWidth="3" />
        </svg>
      </span>
    </button>
  );
}

function Navigator() {
  return (
    <section className="flex w-[383px] shrink-0 flex-col border-b border-[#999] bg-white pt-1.5 pr-[10px] pb-[3px] pl-[9px]">
      <header className="flex items-center">
        <svg viewBox="0 0 12 12" className="mx-[5px] size-3" aria-hidden="true">
          <path d="M1 11l3-3" stroke="#111" strokeWidth="1.500" />
          <ellipse cx="6.500" cy="6" rx="5" ry="4" fill="#c8c81c" stroke="#111" strokeWidth="1.500" transform="rotate(-35 6 6)" />
          <path d="M5 3l4 3" stroke="#fff" strokeWidth="1.500" />
        </svg>
        <h1 className={clsx('ml-[3px] h-[22px] flex-1 border-r-2 border-b-2 border-[#999] pt-px pl-1 text-[12px] leading-[22px] font-bold whitespace-nowrap', halfGray)}>
          Operation Navigator - Program Order
        </h1>
      </header>
      <div className="mt-1 flex min-h-0 flex-1 flex-col border border-[#666] p-px">
        <div className="flex-1">
          <OperationTable />
        </div>
        <div className="flex h-[17px] justify-between border-t border-[#ffffcc]">
          <ScrollButton d="M6 0 2 4 6 8" label="Scroll left" />
          <div className="mx-[3px] flex flex-1">
            <div className="flex w-[128px] items-center justify-center gap-px rounded-xs border border-[#7c9c6c] bg-[linear-gradient(#99cc99_50%,#999966_50%)]">
              {[0, 1, 2, 3].map((i) => (
                <div key={i} className="h-1.5 w-px bg-[#cccc99]" />
              ))}
            </div>
          </div>
          <ScrollButton d="M2 0 6 4 2 8" label="Scroll right" />
        </div>
      </div>
      <div className="my-1 flex items-center gap-1">
        <div className="h-0.5 flex-[143] bg-[#ccc]" />
        <div className="h-1.5 w-[68px] border-r border-b border-[#999] bg-[#ccc]" />
        <div className="h-0.5 flex-[143] bg-[#ccc]" />
      </div>
      <Section title="Dependencies" />
      <Section title="Details" />
    </section>
  );
}

/* ---------- graphics window ---------- */

function Hole({ x, y }: { x: number; y: number }) {
  return (
    <g transform={`translate(${x} ${y})`}>
      <ellipse rx="36" ry="14" fill="#996633" />
      <path d="M2-14A36 14 0 0 0 2 14z" fill="#996666" />
      <path d="M-28-9A36 14 0 0 0-28 9z" fill="#999966" />
      <ellipse rx="36" ry="14" fill="none" stroke="#333" strokeWidth="2.500" />
      <path d="M-18 12Q0 6 18 12" fill="none" stroke="#333" strokeWidth="3" />
    </g>
  );
}

const stripes = ['#996666', '#999966', '#cc9966', '#999966', '#cc9966', '#996666'];

function Part() {
  return (
    <g transform="translate(760 490) scale(0.3333)" stroke="#333" strokeWidth="3" strokeLinejoin="round">
      <g stroke="none">
        <path d="M48 275V360Q50 374 70 380L495 573Q520 587 564 587V500L495 488 70 290z" fill="#996633" />
        <path d="M564 500V587Q610 587 632 578L1047 452V367L632 492z" fill="#996666" />
        <path d="M1047 367V452L1070 442Q1081 436 1080 425V340z" fill="#999966" />
        <path d="M1047 367V452L1057 448V360z" fill="#996666" />
        <path d="M76 238Q44 254 48 275 50 282 70 290L495 488 512 460 90 263Q66 252 76 238z" fill="#cc9966" />
        <path d="M512 460Q560 475 615 464L1030 337 1047 367 632 492Q565 512 495 488z" fill="#ffcc99" />
        <path d="M588 468 615 464 627 493 592 499z" fill="#ffff99" />
        <path d="M512 460 495 488 502 490 516 464z" fill="#ff9966" />
        <path d="M1030 337 1056 308Q1086 330 1080 345L1047 367z" fill="#ffcc66" />
        <path d="M1056 308Q1086 330 1080 345L1058 325z" fill="#cc9966" />
      </g>
      <path d="M92 226 510 97Q560 86 605 97L1030 290Q1062 305 1054 320 1045 332 1030 337L615 464Q560 475 512 460L90 263Q64 250 78 236 84 229 92 226z" fill="#ffcc66" />
      <path d="M76 238Q44 254 48 275V360Q50 374 70 380L495 573Q520 587 564 587 610 587 632 578L1047 452 1070 442Q1081 436 1080 425V345Q1082 327 1056 308" fill="none" />
      <path d="M48 275Q50 282 70 290L495 488Q565 512 632 492L1047 367 1080 345M70 290V380M70 290 90 263M495 488V573M495 488 512 460M632 492V578M632 492 615 464M1047 367V452M1047 367 1030 337" fill="none" />

      <g strokeWidth="2">
        <path d="M470 374 765 281 838 325 640 385Q550 388 470 374z" fill="#ffcc99" stroke="none" />
        <path d="M292 210Q262 222 262 240 262 262 290 287L300 280z" fill="#cc9966" />
        <path d="M292 210 393 181V252L300 282z" fill="#999966" />
        <path d="M393 181 445 204V263L393 252z" fill="#996633" />
        <path d="M445 204 585 161V220L445 263z" fill="#999966" />
        <path d="M585 161 685 207 618 228 585 220z" fill="#996633" />
        <path d="M290 290 393 254 412 256 300 290z" fill="#ff9966" stroke="none" />
        <path d="M760 244 898 306 838 325 760 278z" fill="#996633" />
      </g>
      <clipPath id="lobe">
        <path d="M607 240Q615 258 650 260 690 260 705 246 720 236 762 244V280Q720 270 705 285 680 297 640 295 598 290 602 275z" />
      </clipPath>
      <g clipPath="url(#lobe)" stroke="none">
        <rect x="598" y="230" width="170" height="70" fill="#996633" />
        {[...stripes, ...stripes].map((c, i) => (
          <rect key={i} x={630 + i * 12} y="230" width="12" height="70" fill={c} />
        ))}
      </g>
      <path d="M607 240Q615 258 650 260 690 260 705 246 720 236 762 244V280Q720 270 705 285 680 297 640 295 598 290 602 275zM705 246V285" fill="none" />
      <path d="M292 210 393 181 445 204 585 161 685 207 618 228Q606 234 607 242M762 244 898 306 640 385Q500 390 400 352 262 290 262 240 262 222 292 210" fill="none" />

      <Hole x={145} y={245} />
      <Hole x={559} y={119} />
      <Hole x={982} y={315} />
      <Hole x={568} y={442} />

      <g fill="none" stroke="#ccc" strokeWidth="5">
        <path d="M231 236V326L440 262M231 326 400 405" />
        <path d="M231 72V236" stroke="#0000ff" strokeWidth="6" />
      </g>
      <g stroke="none" fill="#ccc" fontSize="33" fontFamily="Liberation Sans, sans-serif">
        <text x="232" y="58" fill="#ff9933">ZM</text>
        <text x="232" y="186" fill="#ff9933">ZC</text>
        <text x="456" y="257">YM</text>
        <text x="352" y="291">YC</text>
        <text x="328" y="371">XC</text>
        <text x="414" y="411">XM</text>
      </g>
    </g>
  );
}

function Viewport() {
  return (
    <main className="relative min-w-0 flex-1 border-l-3 border-[#666] bg-[#ccc]">
      <svg viewBox="410 176 958 796" className="absolute inset-0 h-full w-full" aria-label="Graphics window">
        <Part />
        <g strokeWidth="2" fontSize="10" fontFamily="Liberation Sans, sans-serif">
          <path d="M480 902V869" stroke="#3333ff" />
          <path d="M480 902 507 894" stroke="#00cc99" />
          <path d="M480 902 502 912" stroke="#ff3333" />
          <circle cx="479.500" cy="902" r="4" fill="#999" />
          <text x="476" y="865" fill="#3333ff">Z</text>
          <text x="512" y="896" fill="#00cc99">Y</text>
          <text x="506" y="919" fill="#ff3333">X</text>
        </g>
        <path d="M522.500 350.500V367L526 363.500 529 370.500 532 369 529 362.500H534z" fill="#fff" stroke="#000" />
      </svg>
    </main>
  );
}

export default function App() {
  return (
    <div className="flex h-screen flex-col overflow-hidden border border-black bg-[#ccc] font-['Liberation_Mono',monospace] text-[10px] leading-4 text-black">
      <div className="flex h-[17px] shrink-0 items-start border-b border-black bg-[#333]">
        <svg viewBox="0 0 12 12" className="h-3 w-[13px]" aria-hidden="true">
          <circle cx="3" cy="4" r="5" fill="#2c9cdc" />
          <path d="M0 9Q7 8 9 0" fill="none" stroke="#f4e8a0" strokeWidth="2" />
        </svg>
        <div className="ml-px text-[13px] leading-[14px] font-bold whitespace-pre text-[#666]">NX 6.0.4.3 - Manufacturing - [ddd_x_t.prt (Modified) ]</div>
      </div>

      <div className="shrink-0 border-t border-white">
        <MenuBar />
        <div className="flex">
          <Toolbar grip={false} items={standard}>
            <button className="flex w-[71px] shrink-0 items-center">
              <Icon name="globe" />
              <span className="ml-1">Start</span>
              <span className="ml-1">
                <Caret />
              </span>
            </button>
          </Toolbar>
          <Toolbar items={view} />
          <Toolbar items={utility} pressed="csys" />
        </div>
        <div className="-ml-0.5 flex">
          <Toolbar grip={false} items={insert} />
          <Toolbar items={objects} />
          <Toolbar items={operations} />
          <Toolbar items={features} pressed="opView" />
        </div>
        <SelectionBar />
        <PromptBar />
      </div>

      <div className="flex min-h-0 flex-1">
        <ResourceBar />
        <Navigator />
        <Viewport />
      </div>

      <div className="shrink-0 border-t border-[#ffffcc]">
        <div className="-ml-0.5 flex">
          <Toolbar grip={false} items={navViews} pressed="progView" />
          <Toolbar items={geometry} />
          <Toolbar items={application} />
        </div>
        <div className="-ml-0.5 flex h-8">
          <Toolbar grip={false} items={assemblies} />
        </div>
      </div>
    </div>
  );
}
